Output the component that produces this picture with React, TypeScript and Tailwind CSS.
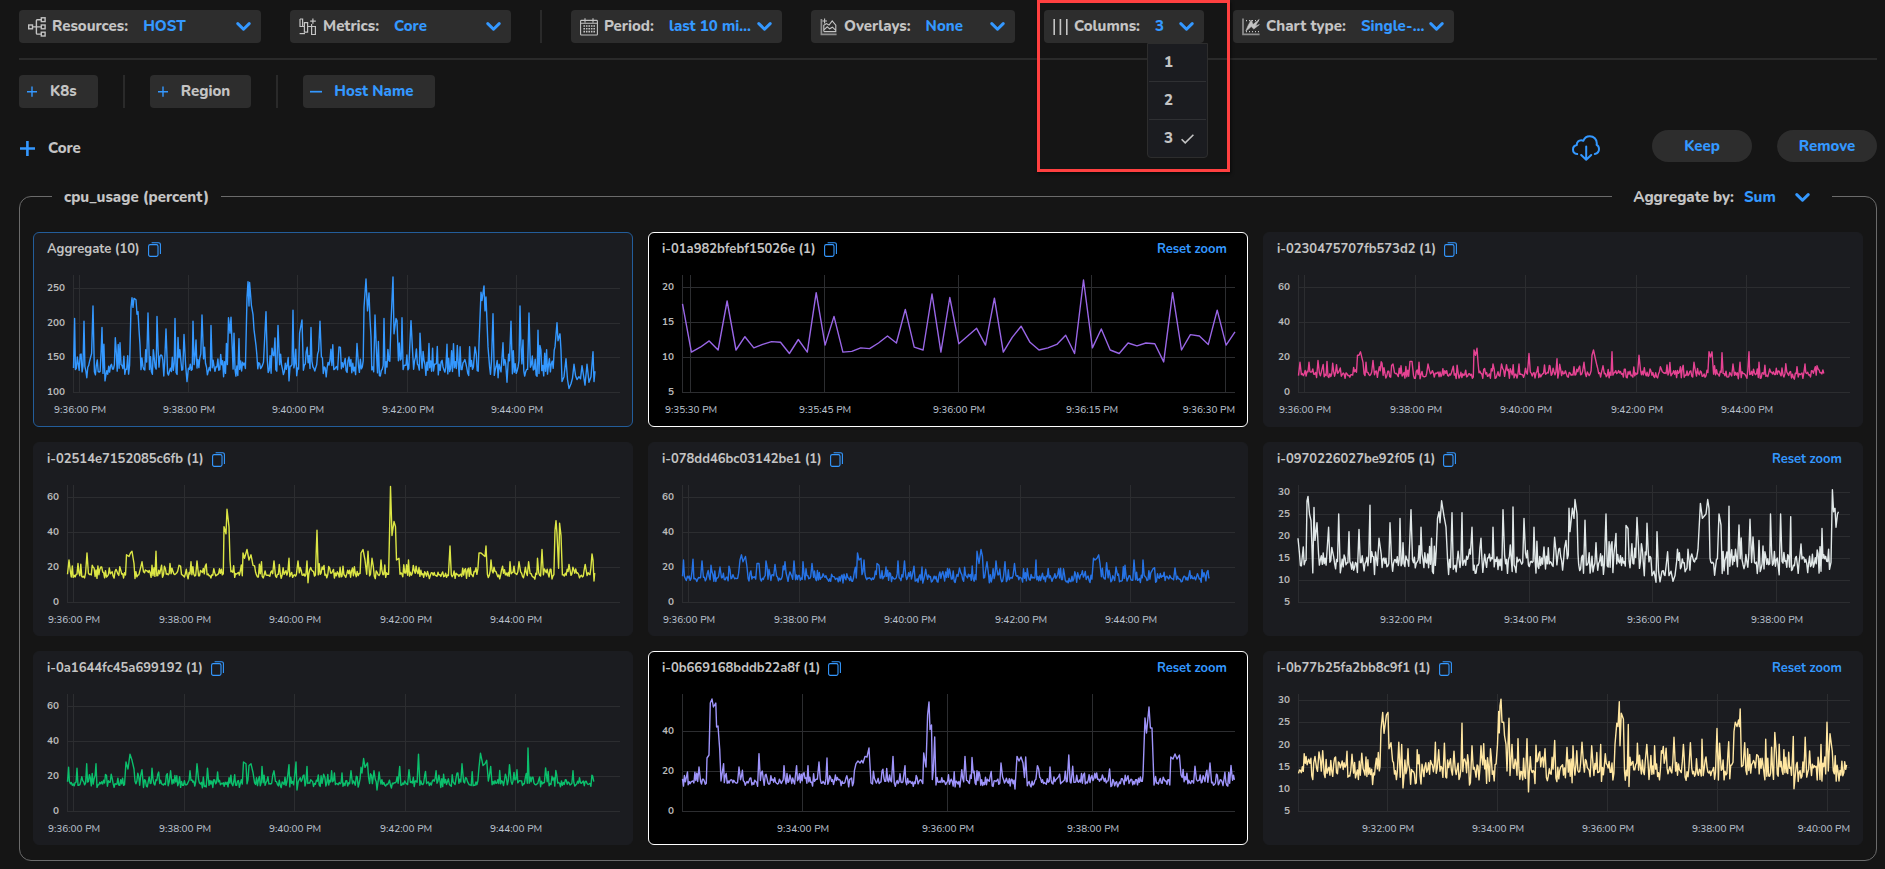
import React, { useState } from 'react';

interface ChartSpec {
  title: string;
  color: string;
  state?: 'aggregate' | 'active';
  zoomed?: boolean;
  // plot area start, first/last sample
  left: number;
  end: number;
  yTicks: { value: number; y: number }[];
  xTicks: { label: string; x: number }[];
  base: number;
  low: number;
  high: number;
  // [x, value] pairs
  peaks: number[][];
  exact?: boolean;
}

const PLOT_TOP = 10;
const PLOT_BOTTOM = 127;
const PLOT_RIGHT = 586;

const liveTicks = [
  { label: '9:36:00 PM', x: 39 },
  { label: '9:38:00 PM', x: 150 },
  { label: '9:40:00 PM', x: 260 },
  { label: '9:42:00 PM', x: 371 },
  { label: '9:44:00 PM', x: 481 },
];

const sixtyTicks = [
  { value: 60, y: 22 },
  { value: 40, y: 57 },
  { value: 20, y: 92 },
  { value: 0, y: 127 },
];

const burst = [
  17.6, 10.7, 11.4, 12.3, 11, 18, 11, 12.9, 11.3, 11.8, 12.2, 12.1, 10.5, 12.5, 10.7, 19.2, 11.7, 15.8, 10.7, 10.8, 11.3,
  11.2, 12, 13, 12, 16.8, 11.4, 11, 19, 10.7, 18.5, 11.9, 13, 14.1, 11.7, 18.4, 10.7, 12.8, 14.4, 12.1, 11, 11.3, 11.8,
  13.1, 10.5, 21, 11.3, 14, 11, 10.5, 12, 11.6, 12, 11.9, 9.3, 19.2, 11, 13.2, 13, 11.8, 16.7, 11.7, 13.6,
];

const charts: ChartSpec[] = [
  {
    title: 'Aggregate (10)',
    color: '#3498ff',
    state: 'aggregate',
    left: 39,
    end: 561,
    yTicks: [
      { value: 250, y: 23 },
      { value: 200, y: 58 },
      { value: 150, y: 92 },
      { value: 100, y: 127 },
    ],
    xTicks: [
      { label: '9:36:00 PM', x: 45 },
      { label: '9:38:00 PM', x: 154 },
      { label: '9:40:00 PM', x: 263 },
      { label: '9:42:00 PM', x: 373 },
      { label: '9:44:00 PM', x: 482 },
    ],
    base: 134,
    low: 15,
    high: 34,
    peaks: [
      [40.6, 206], [50, 202], [59, 224], [68, 193], [71, 116], [86, 171], [97, 222], [98, 236], [99, 222], [100, 235],
      [102, 233], [103, 212], [104, 216], [105, 190], [106, 168], [114, 214], [123, 209], [132, 191], [141, 206],
      [150, 183], [153, 115], [159, 202], [162, 175], [168, 211], [177, 196], [194.5, 207], [196, 185], [197, 208],
      [200, 185], [205, 177], [213, 236], [214, 259], [215, 224], [215.6, 258], [217.4, 225], [219, 212], [220, 190],
      [222, 167], [232, 216], [241, 178], [244, 196], [255, 116], [259, 218], [265.6, 185], [268, 204], [277, 193],
      [286, 202], [305, 165], [323, 170], [330, 222], [332, 263], [333.5, 217], [335, 243], [336, 205], [337, 180],
      [341, 211], [350, 206], [357, 200], [359, 266], [360, 184], [362, 206], [363, 203], [368, 207], [377, 203],
      [386, 185], [395, 170], [413, 169], [441, 165], [445, 170], [447, 244], [448, 232], [450, 253], [451, 217],
      [452, 237], [454, 165], [459, 213], [469, 171], [473, 114], [477, 202], [486, 224], [489, 175], [495, 214],
      [504, 189], [521, 165], [523, 200], [524, 174], [526, 184], [527, 160], [528, 115], [530, 122], [532, 148],
      [533.5, 118], [535, 105], [537, 112], [538.5, 120], [540, 140], [541.5, 124], [543, 118], [545, 122], [546.5, 119],
      [548, 138], [549.5, 124], [551, 110], [553, 140], [555, 114], [557, 122], [559, 158], [560, 115], [561, 130],
    ],
  },
  {
    title: 'i-01a982bfebf15026e (1)',
    color: '#9966e6',
    state: 'active',
    zoomed: true,
    left: 33,
    end: 586,
    yTicks: [
      { value: 20, y: 22 },
      { value: 15, y: 57 },
      { value: 10, y: 92 },
      { value: 5, y: 127 },
    ],
    xTicks: [
      { label: '9:35:30 PM', x: 41 },
      { label: '9:35:45 PM', x: 175 },
      { label: '9:36:00 PM', x: 309 },
      { label: '9:36:15 PM', x: 442 },
      { label: '9:36:30 PM', x: 576 },
    ],
    base: 11,
    low: 0,
    high: 0,
    exact: true,
    peaks: burst.map((v, i) => [33.5 + (i * 552.5) / 62, v]),
  },
  {
    title: 'i-0230475707fb573d2 (1)',
    color: '#e64393',
    left: 34,
    end: 560,
    yTicks: sixtyTicks,
    xTicks: liveTicks.map(t => ({ ...t, x: t.x + 1 })),
    base: 10,
    low: 2.8,
    high: 5,
    peaks: [
      [36, 17], [45, 17], [54, 18], [63, 17.5], [93.5, 21], [95, 21], [96.5, 23], [99, 17], [102, 17], [109, 18],
      [118, 16.5], [129, 16], [137, 15], [146, 17.5], [148, 17.5], [155, 17], [164, 16], [210, 24], [211.5, 21],
      [213, 25], [214, 17], [229, 16], [237.5, 16], [255, 16], [265, 22], [286, 15], [293, 19], [320, 17], [328, 21],
      [329.5, 24], [331, 20], [333, 15], [339, 15], [348, 23], [375, 21], [403, 15.5], [430, 17], [445, 23], [446.5, 20],
      [448, 23], [458, 22.5], [469, 16], [476, 17], [485, 23], [495, 17], [533, 14.5], [541, 16], [553, 15],
    ],
  },
  {
    title: 'i-02514e7152085c6fb (1)',
    color: '#dce645',
    left: 33,
    end: 561,
    yTicks: sixtyTicks,
    xTicks: liveTicks,
    base: 15.6,
    low: 2.6,
    high: 6,
    peaks: [
      [35, 24], [44, 22], [53, 28], [92.5, 27], [95, 26], [96.5, 28], [98, 29], [100, 22], [108, 23], [118, 21],
      [122, 29], [136, 22], [145, 21], [157, 23], [163, 23.5], [190, 43], [192, 39], [193, 53], [195, 43], [196, 24],
      [209, 28], [210.5, 25], [213, 30], [215, 24], [217, 27], [219, 21], [227.5, 23], [240, 23.5], [255, 25],
      [264, 23.5], [273, 23.5], [274, 11], [283, 41], [327, 28], [329, 30], [331, 24], [334, 29], [338, 25], [347, 24],
      [355.6, 41], [356.5, 66], [358, 38], [360, 46], [361.5, 43], [362.5, 24], [365, 25], [374.5, 24], [416, 32],
      [445, 28], [447, 28], [449, 27], [451, 26], [452, 32], [457, 24], [476, 23], [485, 23], [494.6, 23],
      [503.5, 25], [508, 30], [521, 41], [522, 46.5], [523, 39], [525.6, 45], [527, 38], [535, 21.5], [558, 27.5],
      [559, 24], [560, 12],
    ],
  },
  {
    title: 'i-078dd46bc03142be1 (1)',
    color: '#2673e6',
    left: 33,
    end: 561,
    yTicks: sixtyTicks,
    xTicks: liveTicks,
    base: 13.4,
    low: 2.8,
    high: 6,
    peaks: [
      [34.5, 24], [44, 24.5], [53, 23.5], [62, 21], [71, 20], [80, 20.5], [91, 24], [92.5, 27], [94, 23], [96.5, 26],
      [98, 20], [108, 22], [110, 22], [117, 23.5], [126, 21.5], [136, 23], [145, 23.5], [154, 23], [163, 22],
      [208.5, 28], [210, 24], [212, 25], [215, 24], [216, 16], [228, 22], [230, 21], [237, 20], [249, 23.5],
      [255.5, 23.5], [265, 20.5], [273, 20], [310.5, 19.5], [328, 29], [330, 22], [332, 30], [333.5, 26], [338, 23],
      [347, 23.5], [356, 23], [365.5, 22], [374.5, 19], [387, 24], [414.5, 19], [444.5, 25], [446, 24], [448, 25],
      [449.7, 27], [451, 22], [457.6, 22.5], [467, 20], [476, 21], [485, 24], [494, 24], [504, 19], [526, 19.5],
      [553, 18.5], [559, 18],
    ],
  },
  {
    title: 'i-0970226027be92f05 (1)',
    color: '#e1e8e8',
    zoomed: true,
    left: 34,
    end: 574,
    yTicks: [
      { value: 30, y: 17 },
      { value: 25, y: 39 },
      { value: 20, y: 61 },
      { value: 15, y: 83 },
      { value: 10, y: 105 },
      { value: 5, y: 127 },
    ],
    xTicks: [
      { label: '9:32:00 PM', x: 141 },
      { label: '9:34:00 PM', x: 265 },
      { label: '9:36:00 PM', x: 388 },
      { label: '9:38:00 PM', x: 512 },
    ],
    base: 13.7,
    low: 2.8,
    high: 4,
    peaks: [
      [34, 19.5], [43, 28], [44, 29], [45.5, 25], [47, 23.5], [50, 26.5], [51, 19], [53, 23], [64.6, 22], [74.7, 25],
      [85, 21], [95, 21.5], [106, 27], [115, 19.5], [126, 23], [136, 24], [139, 18.5], [147, 26], [157, 22],
      [173.5, 24], [175, 25.5], [176, 23], [177.6, 28], [180, 24.5], [182, 22], [188, 25.3], [198, 25.3], [208, 22],
      [217, 19.5], [229, 22], [239, 26], [249, 26.6], [260, 24], [270, 22], [280, 17.5], [290.6, 19.7], [302, 19],
      [305, 26.3], [306, 21], [308.4, 26.3], [310, 24], [311, 28.3], [313, 25], [314, 16], [321, 23.6], [332, 18.5],
      [342, 25], [352, 20.6], [362, 22.4], [364, 21.7], [373, 24.2], [383, 22.9], [388, 11], [390, 12], [392, 9.5],
      [393, 21], [394.5, 12], [396, 9.6], [398, 12], [401, 11], [403.6, 16.4], [405, 11], [407, 12], [409, 9.7],
      [411, 11], [424, 17], [434, 17], [436.4, 27.4], [438.4, 24], [440.5, 24.6], [442, 25], [443.7, 28.3],
      [445, 26.3], [446, 15], [455, 25], [457, 22.5], [465, 26.8], [475, 22.5], [486, 23.8], [489, 19.8], [495, 19],
      [506.5, 25], [516.6, 25], [526.7, 24.4], [537, 18.2], [558, 21.7], [567, 14], [568.4, 30.5], [569.6, 25.5],
      [571, 26.3], [572, 22], [573.5, 25], [574.5, 25.5],
    ],
  },
  {
    title: 'i-0a1644fc45a699192 (1)',
    color: '#0bbf6c',
    left: 33,
    end: 560,
    yTicks: sixtyTicks,
    xTicks: liveTicks,
    base: 15.8,
    low: 2.8,
    high: 6,
    peaks: [
      [34.6, 25], [43, 24.5], [52.7, 27], [62, 27], [92, 28], [94, 24], [96, 32.5], [98, 29], [100, 24], [108, 23.6],
      [118, 24.5], [136.6, 23], [156, 23], [163, 27], [173.5, 24.5], [209.5, 28], [212, 27], [215, 26], [217, 27],
      [219, 22], [228, 25.5], [240, 23], [255, 26.5], [262, 28], [263, 12], [273, 25.5], [289.6, 21], [308, 21.7],
      [317, 23], [327, 25], [329.6, 30], [331, 25], [333.5, 27.5], [340, 23], [343, 12], [365.7, 25.5], [375, 23.6],
      [384.5, 32.5], [391.5, 22.6], [409.6, 21], [428, 27], [445, 25], [446.5, 33], [449, 26], [451, 27],
      [452.7, 29], [456.7, 25.5], [475.5, 26.5], [483, 23.6], [494, 36], [511.6, 24.6], [539, 23], [558.6, 20],
    ],
  },
  {
    title: 'i-0b669168bddb22a8f (1)',
    color: '#9e94fa',
    state: 'active',
    zoomed: true,
    left: 33,
    end: 586,
    yTicks: [
      { value: 40, y: 47 },
      { value: 20, y: 87 },
      { value: 0, y: 127 },
    ],
    xTicks: [
      { label: '9:34:00 PM', x: 153 },
      { label: '9:36:00 PM', x: 298 },
      { label: '9:38:00 PM', x: 443 },
    ],
    base: 14.6,
    low: 2.8,
    high: 5,
    peaks: [
      [38.5, 19.5], [50, 22], [58, 26.5], [60, 28], [61.3, 54], [63, 56], [64.4, 52], [66.8, 54], [67.6, 42], [69, 42.5],
      [70.7, 31], [72, 15], [74.6, 23.7], [90, 22], [110, 28.7], [135, 22.7], [147.6, 22.7], [159, 22.7], [170, 24.5],
      [178, 26.5], [207, 23.7], [209, 25], [211, 24], [212.7, 25.3], [214, 24], [216, 27.3], [218, 27], [220, 31.5],
      [222, 14], [233, 20], [244, 27.3], [256, 22.7], [274.7, 29], [277, 22], [278.6, 48], [280, 54.5], [281, 40.7],
      [282.5, 43], [285.7, 37], [287, 13], [316, 27.3], [323, 26.8], [352, 24], [366, 11], [368, 27.3], [370, 25],
      [372, 27], [374, 24], [376.7, 27], [388.4, 22.7], [401, 22], [419.8, 28], [423.7, 22.4], [435.5, 19],
      [460.6, 21], [494, 18], [496, 46.5], [497.5, 39], [500, 52], [501.4, 41.5], [503, 41.5], [505, 13], [521.8, 27],
      [524, 26], [526, 28.5], [528, 26], [530.4, 28], [532, 18], [546, 22.4], [561, 24], [582, 22.8],
    ],
  },
  {
    title: 'i-0b77b25fa2bb8c9f1 (1)',
    color: '#ffe6a1',
    zoomed: true,
    left: 34,
    end: 583,
    yTicks: [
      { value: 30, y: 16 },
      { value: 25, y: 38 },
      { value: 20, y: 61 },
      { value: 15, y: 83 },
      { value: 10, y: 105 },
      { value: 5, y: 127 },
    ],
    xTicks: [
      { label: '9:32:00 PM', x: 123 },
      { label: '9:34:00 PM', x: 233 },
      { label: '9:36:00 PM', x: 343 },
      { label: '9:38:00 PM', x: 453 },
      { label: '9:40:00 PM', x: 563 },
    ],
    base: 13.9,
    low: 3.2,
    high: 4.4,
    peaks: [
      [44.7, 16.7], [51, 17.3], [55, 18.3], [58.7, 18.6], [88, 17.8], [97.8, 18], [116, 15], [117, 23.3],
      [118.7, 27.2], [120, 22.5], [122.4, 26.6], [124, 27.2], [125, 19], [127, 20.4], [134.8, 20.5], [137.7, 20],
      [139, 10.2], [144, 19], [155, 17.7], [171.4, 20.5], [174.7, 18.8], [180.4, 20.3], [190, 18.5], [198, 24.8],
      [208, 19.7], [217, 19.7], [226.5, 19], [233.5, 20], [234.7, 27.4], [235.3, 22.6], [236, 28.7], [237, 30.2],
      [238, 25], [239.7, 25], [240.5, 22], [242, 20], [243, 14], [245, 25.9], [246, 13], [248, 20], [254, 21.3],
      [263, 21.3], [264.5, 9.3], [272, 19.8], [281, 19], [290.7, 20.9], [303, 19.3], [309, 19.7], [318, 20.5],
      [327.7, 19.7], [336.7, 20], [351, 20], [352.8, 24.8], [354, 24], [355.3, 29.6], [356, 19.7], [357.3, 27],
      [359.4, 25.7], [360.5, 14], [364.3, 24.5], [365, 10.5], [373.4, 20.3], [382.8, 20], [390.6, 19.7], [410, 21.6],
      [419.4, 20], [426.4, 20.4], [438, 21.2], [453, 23.6], [455.6, 20.3], [464.7, 20.6], [469, 16], [470, 22.9],
      [471.3, 25], [473, 24], [474.6, 25.5], [475.4, 24], [476.2, 28], [477.5, 15], [480.7, 20.4], [483.6, 19],
      [492.7, 17.7], [501.7, 21.2], [510.8, 22.7], [529.3, 21.8], [530, 10], [541.2, 21.6], [557, 20], [563, 25],
      [564.3, 14], [566, 22.4], [568.3, 18.4],
    ],
  },
];

// Small seeded generator so that the idle load looks the same on each render.
function seeded(seed: number) {
  let s = seed;
  return () => {
    s = (s * 1664525 + 1013904223) % 4294967296;
    return s / 4294967296;
  };
}

function buildPath(chart: ChartSpec, seed: number) {
  const { yTicks, peaks, base, low, high, left, end } = chart;
  const top = yTicks[0];
  const bottom = yTicks[yTicks.length - 1];
  const scale = (bottom.y - top.y) / (top.value - bottom.value);
  const rand = seeded(seed * 7919 + 13);
  const points = peaks.slice();

  if (!chart.exact) {
    for (let x = left + 0.5; x <= end; x += 0.95) {
      const noise = (rand() + rand() - 1) * low + (rand() < 0.32 ? rand() * high : 0);
      const covered = peaks.some((p, i) => {
        const next = peaks[i + 1];
        return Math.abs(p[0] - x) < 0.7 || (next && next[0] - p[0] < 2.6 && x > p[0] && x < next[0]);
      });
      if (!covered) points.push([x, base + noise]);
    }
    points.sort((a, b) => a[0] - b[0]);
  }

  return points
    .map(([x, v], i) => `${i ? 'L' : 'M'}${x.toFixed(1)} ${(bottom.y - (v - bottom.value) * scale).toFixed(1)}`)
    .join('');
}

function Chevron() {
  return (
    <svg width="15" height="9" viewBox="0 0 15 9" className="pointer-events-none shrink-0" fill="none" stroke="#3498ff" strokeWidth="3" strokeLinecap="round" strokeLinejoin="round">
      <path d="M1.8 1.6 7.5 7.2 13.2 1.6" />
    </svg>
  );
}

function CopyIcon() {
  return (
    <svg width="13" height="15" viewBox="0 0 13 15" fill="none" stroke="#3498ff" strokeWidth="1.1">
      <rect x="0.6" y="2.6" width="9.4" height="11.8" rx="1.6" />
      <path d="M3.6 .7H10.4C11.6 .7 12.4 1.4 12.4 2.6V12" />
    </svg>
  );
}

const ResourcesIcon = () => (
  <svg width="18" height="20" viewBox="0 0 18 20" fill="none" stroke="#c4c4c4" strokeWidth="1.4">
    <rect x=".7" y="8" width="3.8" height="3.8" />
    <rect x="13.3" y=".8" width="3.8" height="3.8" />
    <rect x="13.3" y="8" width="3.8" height="3.8" />
    <rect x="13.3" y="15.2" width="3.8" height="3.8" />
    <path d="M4.5 9.9H13.3M13.3 2.7H9.2Q8.4 2.7 8.4 3.5V16.3Q8.4 17.1 9.2 17.1H13.3" />
  </svg>
);

const MetricsIcon = () => (
  <svg width="18" height="18" viewBox="0 0 18 18" fill="none" stroke="#c4c4c4" strokeWidth="1.2">
    <path d="M1 1V8.5H5.4V4.6H8.6V8.5H12.6V16.5H16.4V8.5H8.6V14.2H5.4V8.5M1 1H3.6V8.5M12.6 8.5V6M13.9 .5V5.8M11.2 3.1H16.8" />
    <path d="M.6 15.6H6" />
  </svg>
);

const CalendarIcon = () => (
  <svg width="18" height="18" viewBox="0 0 18 18" fill="none" stroke="#c4c4c4">
    <rect x=".6" y="2.4" width="16.8" height="14.6" rx=".8" strokeWidth="1.1" />
    <path d="M.6 5.2H17.4M5 .2V4.6M13 .2V4.6" strokeWidth="1.1" />
    <path d="M3.4 8H15M3.4 10.8H15M3.4 13.6H15" strokeWidth="1.6" strokeDasharray="1.6 .9" />
  </svg>
);

const OverlaysIcon = () => (
  <svg width="18" height="18" viewBox="0 0 18 18" fill="none" stroke="#c4c4c4" strokeWidth="1.1">
    <path d="M1.4 1V16.4H16.6" strokeWidth="1.7" stroke="#8f8f8f" />
    <path d="M4.6 .4V5.6M2.4 3H7" />
    <path d="M3.8 13.4V7.4L6.4 5.6 9 7 12.2 2.8 15.8 7.2V13.6H3.8M4 11.8 7.2 8.8 9.6 10.8 12.4 9.2 15.8 12.4" />
  </svg>
);

const ColumnsIcon = () => (
  <svg width="15" height="18" viewBox="0 0 15 18" fill="none" stroke="#c4c4c4" strokeWidth="1.6">
    <path d="M1.2 1V17M7.4 1V17M13.8 1V17" />
  </svg>
);

const ChartTypeIcon = () => (
  <svg width="18" height="18" viewBox="0 0 18 18" fill="none" stroke="#c4c4c4" strokeWidth="1.1">
    <path d="M1 .6V16.4H17.6" strokeWidth="1.7" stroke="#8f8f8f" />
    <path d="M4 2.6H17M4 13.6H17" strokeDasharray="1 2" />
    <path d="M3.8 13 6.2 7.4 9.2 2 11 6.6 17.2 1.4 13.4 8 17.4 6.6 11.8 11 9.2 8.6 7 10.6Z" fill="#c4c4c4" strokeWidth=".6" />
  </svg>
);

interface FilterProps {
  id: string;
  label: string;
  value: string;
  options: string[];
  icon: React.ReactNode;
  className: string;
}

function Filter({ id, label, value, options, icon, className }: FilterProps) {
  return (
    <div className={`flex h-[33px] shrink-0 items-center rounded-sm bg-[#2d2d2d] pr-[10px] pl-[9px] ${className}`}>
      {icon}
      <label htmlFor={id} className="ml-[6px] shrink-0">{label}</label>
      <select
        id={id}
        defaultValue={value}
        className="ml-[15px] min-w-0 flex-1 appearance-none truncate bg-transparent font-extrabold text-[#3498ff] outline-none"
      >
        {options.map(option => (
          <option key={option} className="bg-[#2d2d2d]">{option}</option>
        ))}
      </select>
      <Chevron />
    </div>
  );
}

function ColumnsPicker() {
  const [open, setOpen] = useState(true);
  const [columns, setColumns] = useState(3);

  return (
    <div className="relative shrink-0">
      <button
        aria-haspopup="listbox"
        aria-expanded={open}
        onClick={() => setOpen(!open)}
        className="flex h-[33px] w-40 items-center rounded-sm bg-[#2d2d2d] pr-[10px] pl-[9px]"
      >
        <ColumnsIcon />
        <span className="ml-[6px]">Columns:</span>
        <span className="ml-[15px] flex-1 text-left text-[#3498ff]">{columns}</span>
        <Chevron />
      </button>
      {open && (
        <ul role="listbox" className="absolute top-full left-[103px] z-10 w-[61px] rounded-b border border-[#2d2d2d] bg-[#1b1c20] px-px">
          {[1, 2, 3].map(n => (
            <li key={n} role="option" aria-selected={n === columns} className="border-b border-[#2f3033] last:border-b-0">
              <button onClick={() => setColumns(n)} className="flex h-[37px] w-full items-center gap-2 pl-[15px]">
                {n}
                {n === columns && (
                  <svg width="13" height="10" viewBox="0 0 13 10" fill="none" stroke="#c4c4c4" strokeWidth="1.6">
                    <path d="M.6 5.2 4.2 8.8 12.4 .8" />
                  </svg>
                )}
              </button>
            </li>
          ))}
        </ul>
      )}
      {/* Callout frame */}
      <div className="pointer-events-none absolute -top-[10px] -left-[7px] z-20 h-[172px] w-[193px] border-3 border-[#ff4040] shadow-[1px_2px_3px_rgba(0,0,0,0.6)]"></div>
    </div>
  );
}

function Divider() {
  return <div className="h-[33px] w-[2px] shrink-0 bg-[#2a2a2a]"></div>;
}

function GroupChip({ label, selected }: { label: string; selected?: boolean }) {
  return (
    <button className={`flex h-[33px] items-center gap-3 rounded-sm bg-[#2d2d2d] pr-[21px] pl-[7px] ${selected ? 'text-[#3498ff]' : ''}`}>
      <svg width="12" height="12" viewBox="0 0 12 12" stroke="#3498ff" strokeWidth="1.4">
        {selected ? <path d="M0 5.7H12" strokeWidth="1.7" /> : <path d="M1 5.7H11M6 .6V10.8" />}
      </svg>
      {label}
    </button>
  );
}

function ChartCard({ chart, seed }: { chart: ChartSpec; seed: number }) {
  const look = {
    aggregate: 'border-[#235d9a] bg-[#1b1c20]',
    active: 'border-white bg-black',
    plain: 'border-[#1b1c20] bg-[#1b1c20]',
  }[chart.state ?? 'plain'];

  return (
    <section className={`flex min-w-0 flex-col overflow-hidden rounded-md border ${look}`}>
      <header className="flex h-8 items-center pr-5 pl-[13px] text-[13px] leading-5 font-bold">
        <h3>{chart.title}</h3>
        <button aria-label={`Copy ${chart.title}`} className="ml-2">
          <CopyIcon />
        </button>
        {chart.zoomed && <button className="ml-auto text-[#3498ff]">Reset zoom</button>}
      </header>
      <svg viewBox="0 0 598 160" className="w-full" role="img" aria-label={`${chart.title} cpu usage`}>
        <g stroke="#2c2d30" strokeWidth="1">
          {chart.yTicks.map(t => (
            <path key={t.value} d={`M${chart.left} ${t.y + 0.5}H${PLOT_RIGHT}`} />
          ))}
          {chart.xTicks.map(t => (
            <path key={t.x} d={`M${t.x + 0.5} ${PLOT_TOP}V${PLOT_BOTTOM}`} />
          ))}
          <path d={`M${chart.left + 0.5} ${PLOT_TOP}V${PLOT_BOTTOM}`} />
        </g>
        <path d={buildPath(chart, seed)} fill="none" stroke={chart.color} strokeWidth="1.4" strokeLinejoin="round" />
        <g className="text-[10px] font-bold" fill="#b8b8b8" textAnchor="end">
          {chart.yTicks.map(t => (
            <text key={t.value} x={chart.left - 8} y={t.y + 3}>{t.value}</text>
          ))}
        </g>
        <g className="text-[10px] font-medium" fill="#b4bec8" textAnchor="middle">
          {chart.xTicks.map(t =>
            t.x > 560 ? (
              <text key={t.x} x={PLOT_RIGHT} y={148} textAnchor="end">{t.label}</text>
            ) : (
              <text key={t.x} x={t.x + 1} y={148}>{t.label}</text>
            )
          )}
        </g>
      </svg>
    </section>
  );
}

export default function App() {
  return (
    <div className="min-h-screen bg-[#151515] pr-2 pb-2 pl-[19px] font-['Nunito','Noto_Sans',sans-serif] text-[15px] font-extrabold text-[#c4c4c4]">
      {/* Filters */}
      <div className="flex gap-[29px] border-b-2 border-[#2a2a2a] pt-[10px] pb-[15px]">
        <Filter id="resources" label="Resources:" value="HOST" options={['HOST', 'K8S']} icon={<ResourcesIcon />} className="w-[242px]" />
        <Filter id="metrics" label="Metrics:" value="Core" options={['Core', 'All']} icon={<MetricsIcon />} className="w-[221px]" />
        <Divider />
        <Filter id="period" label="Period:" value="last 10 minutes" options={['last 10 minutes', 'last 1 hour']} icon={<CalendarIcon />} className="w-[211px]" />
        <Filter id="overlays" label="Overlays:" value="None" options={['None', 'Alerts']} icon={<OverlaysIcon />} className="w-[204px]" />
        <ColumnsPicker />
        <Filter id="chart-type" label="Chart type:" value="Single-metric" options={['Single-metric', 'Multi-metric']} icon={<ChartTypeIcon />} className="w-[221px]" />
      </div>

      {/* Grouping */}
      <div className="flex gap-[25px] pt-[15px]">
        <GroupChip label="K8s" />
        <Divider />
        <GroupChip label="Region" />
        <Divider />
        <GroupChip label="Host Name" selected />
      </div>

      <div className="mt-[22px] flex h-8 items-center">
        <button className="flex items-center gap-[13px] pt-1">
          <svg width="16" height="15" viewBox="0 0 16 15" stroke="#3498ff" strokeWidth="2.6">
            <path d="M1 7.5H16M8.4 0V15" />
          </svg>
          Core
        </button>
        <button aria-label="Download" className="mr-[52px] ml-auto pt-1">
          <svg width="28" height="26" viewBox="0 0 28 26" fill="none" stroke="#3498ff" strokeWidth="2" strokeLinecap="round" strokeLinejoin="round">
            <path d="M5.2 19C2.6 18.6 1 16.8 1 14.4C1 12.2 2.6 10.4 4.8 10C4.6 7 6.8 5.2 9.2 5.2C10 5.2 10.8 5.4 11.4 5.8C12.4 2.8 14.8 1.2 17.8 1.2C21.8 1.2 24.8 4.2 24.8 8.2C24.8 8.8 24.8 9.2 24.6 9.8C26.2 10.6 27 12.2 27 14C27 16.6 25.4 18.4 22.8 19" />
            <path d="M14.2 11.4V24.6M9.2 20 14.2 24.8 19.2 20" />
          </svg>
        </button>
        <button className="mr-[25px] h-8 w-[100px] rounded-full bg-[#2d2d2d] text-[#3498ff]">Keep</button>
        <button className="h-8 w-[100px] rounded-full bg-[#2d2d2d] text-[#3498ff]">Remove</button>
      </div>

      <main className="mt-[34px] rounded-xl border border-[#6b6b6b] px-[13px] pb-[15px]">
        <div className="-mt-3 flex h-6 items-center justify-between pr-[31px] pl-[19px]">
          <h2 className="bg-[#151515] px-3">cpu_usage (percent)</h2>
          <div className="flex items-center bg-[#151515] pr-[22px] pl-[21px]">
            <label htmlFor="aggregate">Aggregate by:</label>
            <select id="aggregate" defaultValue="Sum" className="ml-[10px] w-[51px] appearance-none bg-transparent font-extrabold text-[#3498ff] outline-none">
              <option className="bg-[#2d2d2d]">Sum</option>
              <option className="bg-[#2d2d2d]">Avg</option>
            </select>
            <Chevron />
          </div>
        </div>

        <div className="mt-[23px] grid grid-cols-3 grid-rows-[minmax(195px,auto)_minmax(194px,auto)_minmax(194px,auto)] gap-[15px]">
          {charts.map((chart, i) => (
            <ChartCard key={chart.title} chart={chart} seed={i + 1} />
          ))}
        </div>
      </main>
    </div>
  );
}
